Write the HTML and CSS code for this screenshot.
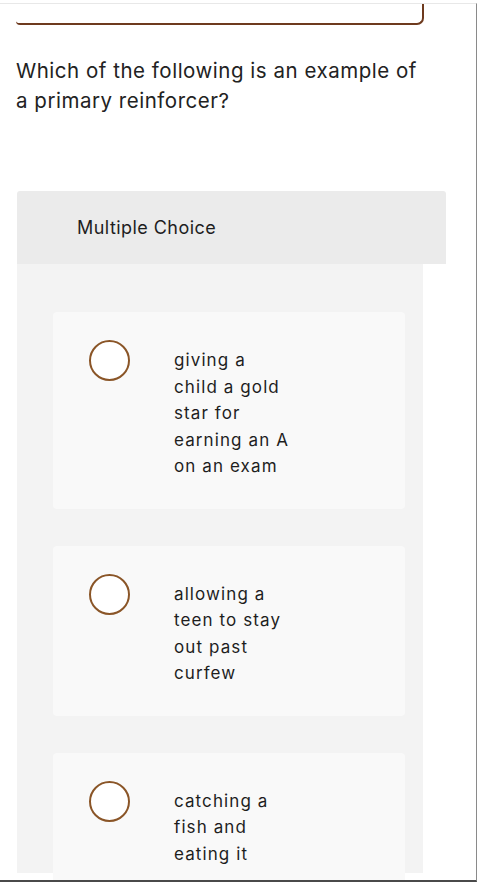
FILE: index.html
```html
<!DOCTYPE html>
<html lang="en">
<head>
<meta charset="utf-8">
<title>Multiple Choice</title>
<link rel="stylesheet" href="styles.css">
</head>
<body>
<div class="frame">
  <div class="prev-box"></div>
  <p class="question">Which of the following is an example of<br>a primary reinforcer?</p>
  <section class="mc">
    <header class="mc-head">Multiple Choice</header>
    <div class="mc-body">
      <label class="option">
        <span class="radio"></span>
        <span class="opt-text">giving a<br>child a gold<br>star for<br>earning an A<br>on an exam</span>
      </label>
      <label class="option">
        <span class="radio"></span>
        <span class="opt-text">allowing a<br>teen to stay<br>out past<br>curfew</span>
      </label>
      <label class="option">
        <span class="radio"></span>
        <span class="opt-text">catching a<br>fish and<br>eating it</span>
      </label>
    </div>
  </section>
</div>
</body>
</html>
```
FILE: styles.css
```css
html, body {
  margin: 0;
  padding: 0;
  background: #ffffff;
}
body {
  font-family: "Inter", "Open Sans", sans-serif;
  color: #1e1e1e;
}
.frame {
  box-sizing: border-box;
  margin-top: 3px;
  width: 477px;
  height: 879px;
  border-top: 1px solid #e8e8e8;
  border-right: 1px solid #8a8a8a;
  border-bottom: 2px solid #4a4a4a;
  overflow: hidden;
}
.prev-box {
  box-sizing: border-box;
  margin-left: 16px;
  width: 408px;
  height: 21px;
  border-right: 2px solid #6e3a1e;
  border-bottom: 2px solid #6e3a1e;
  border-bottom-right-radius: 7px;
  border-bottom-left-radius: 4px;
}
.question {
  margin: 31px 0 0 16px;
  white-space: nowrap;
  font-size: 20.5px;
  letter-spacing: 0.52px;
  line-height: 30px;
  color: #222;
}
.mc {
  margin: 75px 0 0 17px;
}
.mc-head {
  box-sizing: border-box;
  width: 429px;
  height: 73px;
  background: #ebebeb;
  border-radius: 3px 3px 0 0;
  padding-left: 60px;
  font-size: 18px;
  letter-spacing: 0.45px;
  line-height: 73px;
  color: #1e1e1e;
}
.mc-body {
  box-sizing: border-box;
  width: 406px;
  height: 609px;
  background: #f3f3f3;
  padding: 48px 18px 0 36px;
  display: flex;
  flex-direction: column;
  gap: 37px;
}
.option {
  flex: none;
  display: flex;
  align-items: flex-start;
  background: #f9f9f9;
  border-radius: 4px;
  padding: 28px 20px 29px 36px;
}
.radio {
  flex: none;
  box-sizing: border-box;
  width: 41px;
  height: 41px;
  border: 2px solid #8a5527;
  border-radius: 50%;
  background: #fff;
}
.opt-text {
  margin: 7px 0 0 44px;
  white-space: nowrap;
  font-size: 17px;
  letter-spacing: 1.1px;
  line-height: 26.5px;
  color: #1e1e1e;
}
```
